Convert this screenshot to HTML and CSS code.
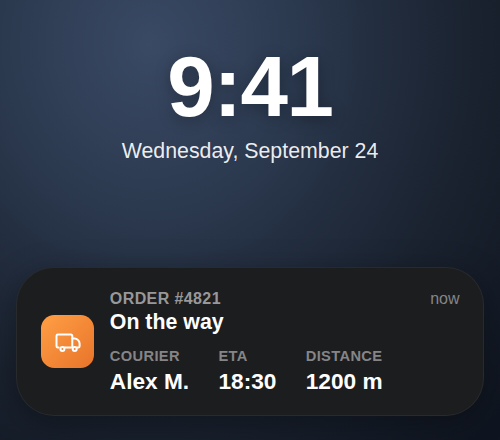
FILE: index.html
```html
<!DOCTYPE html>
<html lang="en">
<head>
<meta charset="utf-8">
<title>Lock screen</title>
<link rel="stylesheet" href="styles.css">
</head>
<body>
<main class="screen">
  <header class="clock">
    <div class="time">9:41</div>
    <div class="date">Wednesday, September 24</div>
  </header>
  <section class="card">
    <div class="icon">
      <svg viewBox="0 0 27 22" width="27" height="22" fill="none" stroke="#fff" stroke-width="2" stroke-linejoin="round" stroke-linecap="round">
        <path d="M4.6 16.6H3.9A1.4 1.4 0 0 1 2.5 15.2V4.9A1.4 1.4 0 0 1 3.9 3.5H16.9A1.4 1.4 0 0 1 18.3 4.9V16.6H10.8"/>
        <path d="M18.3 7.4H20.6C22.9 7.4 25.6 9.8 25.6 12.4V15.2A1.4 1.4 0 0 1 24.2 16.6H23.4"/>
        <circle cx="8.4" cy="17.9" r="2"/>
        <circle cx="20.7" cy="17.9" r="2"/>
      </svg>
    </div>
    <div class="content">
      <div class="top"><span class="order">ORDER #4821</span><span class="now">now</span></div>
      <div class="status">On the way</div>
      <div class="stats">
        <div><div class="label">COURIER</div><div class="value">Alex M.</div></div>
        <div><div class="label">ETA</div><div class="value">18:30</div></div>
        <div><div class="label">DISTANCE</div><div class="value">1200 m</div></div>
      </div>
    </div>
  </section>
</main>
</body>
</html>
```
FILE: styles.css
```css
* { box-sizing: border-box; }
body { margin: 0; font-family: "Liberation Sans", Arial, sans-serif; color: #fff; }
.screen {
  height: 440px;
  padding: 43px 16px 24px;
  display: flex;
  flex-direction: column;
  justify-content: space-between;
  overflow: hidden;
  background: radial-gradient(480px 540px at 30% 10%, #3a4964 0%, #2c3a50 30%, #232e40 46%, #1a222f 68%, #0f1520 100%);
}
.clock { text-align: center; }
.time {
  font-size: 85.33px;
  line-height: 88px;
  font-weight: 700;
  letter-spacing: -1.33px;
  text-shadow: 0 3px 16px rgba(0, 0, 0, .3);
}
.date { margin-top: 7px; font-size: 21.33px; line-height: 26px; color: rgba(255, 255, 255, .92); }
.card {
  height: 149.33px;
  padding: 0 23.5px;
  display: flex;
  align-items: center;
  gap: 16px;
  border: 1px solid rgba(255, 255, 255, .06);
  border-radius: 38px;
  background: #1c1d1f;
  box-shadow: 0 8px 32px rgba(0, 0, 0, .35);
}
.icon {
  flex: none;
  width: 53.33px;
  height: 53.33px;
  display: grid;
  place-items: center;
  padding-top: 1px;
  border-radius: 13.33px;
  background: linear-gradient(135deg, #ff9f45, #e8742a);
}
.content { flex: 1; }
.top { display: flex; justify-content: space-between; padding-top: 2px; font-size: 16px; line-height: 18px; }
.order { font-weight: 700; letter-spacing: .4px; color: #98989a; }
.now { color: #858587; }
.status { margin-top: 1px; font-size: 21.33px; line-height: 26px; font-weight: 700; }
.stats { display: flex; gap: 29.33px; margin-top: 13px; }
.label { font-size: 14.67px; line-height: 16px; font-weight: 700; letter-spacing: .35px; color: #858587; }
.value { margin-top: 4px; font-size: 22.67px; line-height: 26px; font-weight: 700; }
```
